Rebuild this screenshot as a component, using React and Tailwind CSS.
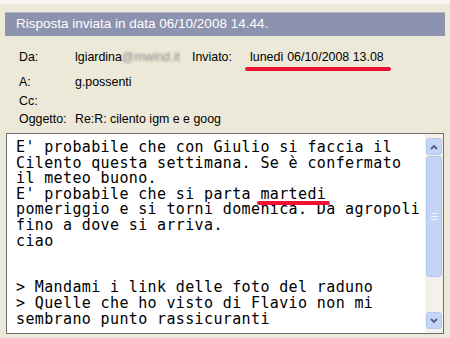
import React from "react";

const bodyLines = [
  "E' probabile che con Giulio si faccia il",
  "Cilento questa settimana. Se è confermato",
  "il meteo buono.",
];

function Mark({ children, wide }) {
  return (
    <span className="relative inline-block">
      {children}
      <span
        className={
          wide
            ? "absolute left-[-5px] right-[-7px] bottom-[-5px] h-[4px] rounded-full bg-[#ee1133]"
            : "absolute left-[-3px] right-[-4px] bottom-[-3px] h-[4px] rounded-full bg-[#ee1133]"
        }
      />
    </span>
  );
}

function ScrollButton({ up }) {
  return (
    <div className="h-[17px] mx-[1px] rounded-[3px] border border-[#b6c8ef] bg-[#c5d5f8] flex items-center justify-center">
      <svg width="8" height="6" viewBox="0 0 8 6">
        <path
          d={up ? "M1 5 L4 2 L7 5" : "M1 1 L4 4 L7 1"}
          fill="none"
          stroke="#4d6185"
          strokeWidth="1.8"
        />
      </svg>
    </div>
  );
}

export default function App() {
  return (
    <div className="w-[450px] h-[338px] overflow-hidden bg-[#ece9d8] border-t-[4px] border-[#f6f5f0] flex flex-col" style={{ fontFamily: "'Liberation Sans', Arial, sans-serif" }}>
      {/* Title bar */}
      <div className="mx-[5px] mt-[8px] h-[24px] bg-[#8c93ae] border-t border-[#b5bacb] flex items-center pl-[11px] text-white text-[13.5px]">
        Risposta inviata in data 06/10/2008 14.44.
      </div>

      {/* Header fields */}
      <div className="text-[12.4px] text-black pl-[19px] pt-[10px]">
        <div className="flex h-[22px] items-center">
          <span className="w-[56px]">Da:</span>
          <span className="w-[117px]">
            lgiardina
            <span className="inline-block blur-[1.2px] text-[#8a8a8a]">@mwind.it</span>
          </span>
          <span className="w-[58px]">Inviato:</span>
          <Mark wide>
            <span>lunedì 06/10/2008 13.08</span>
          </Mark>
        </div>
        <div className="flex h-[20px] items-center mt-[4px]">
          <span className="w-[56px]">A:</span>
          <span>g.possenti</span>
        </div>
        <div className="flex h-[18px] items-center">
          <span className="w-[56px]">Cc:</span>
        </div>
        <div className="flex h-[18px] items-center">
          <span className="w-[56px]">Oggetto:</span>
          <span>Re:R: cilento igm e e goog</span>
        </div>
      </div>

      {/* Message body */}
      <div className="mx-[6px] mt-[5px] h-[201px] border border-[#6f6f6f] bg-white flex">
        <div
          className="flex-1 pl-[9px] pt-[6px] text-[15px] tracking-[0.37px] leading-[15.6px] text-black whitespace-pre"
          style={{ fontFamily: "'DejaVu Sans Mono', 'Liberation Mono', monospace" }}
        >
          {bodyLines.map((l) => (
            <div key={l}>{l}</div>
          ))}
          <div>
            E' probabile che si parta <Mark>martedi</Mark>
          </div>
          <div>pomeriggio e si torni domenica. Da agropoli</div>
          <div>fino a dove si arriva.</div>
          <div>ciao</div>
          <div>&nbsp;</div>
          <div>&nbsp;</div>
          <div>&gt; Mandami i link delle foto del raduno</div>
          <div>&gt; Quelle che ho visto di Flavio non mi</div>
          <div>sembrano punto rassicuranti</div>
        </div>

        {/* Scrollbar */}
        <div className="w-[18px] bg-[#f3f1ea] flex flex-col py-[4px]">
          <ScrollButton up />
          <div className="mx-[1px] mt-[1px] h-[121px] rounded-[3px] border border-[#b3c5ee] bg-[#c4d4f7] flex flex-col items-center justify-center gap-[2px]">
            <div className="w-[7px] h-[1px] bg-[#eef3fd]" />
            <div className="w-[7px] h-[1px] bg-[#eef3fd]" />
            <div className="w-[7px] h-[1px] bg-[#eef3fd]" />
          </div>
          <div className="flex-1" />
          <ScrollButton />
        </div>
      </div>
    </div>
  );
}
